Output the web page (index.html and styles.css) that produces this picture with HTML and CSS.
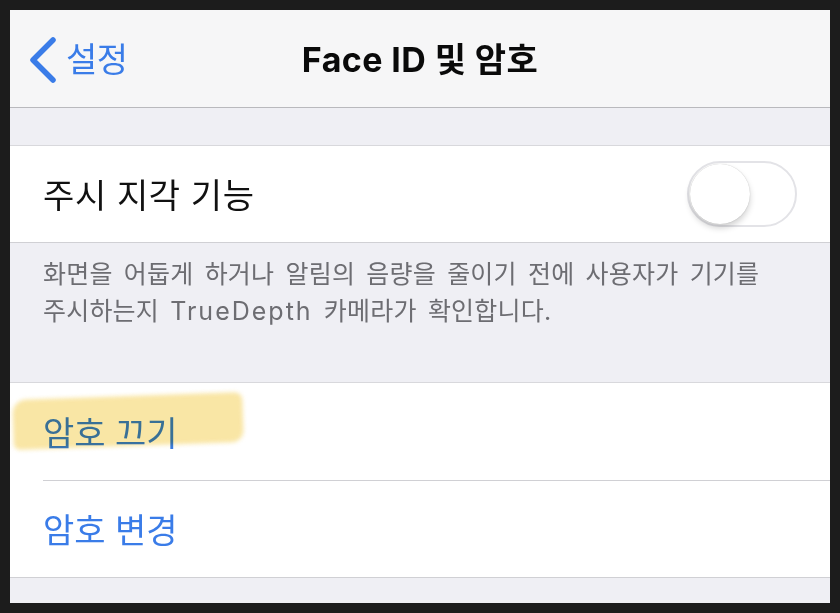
FILE: index.html
```html
<!DOCTYPE html>
<html lang="ko">
<head>
<meta charset="utf-8">
<title>Face ID 및 암호</title>
<link rel="stylesheet" href="styles.css">
</head>
<body>
<div class="screen">
  <header class="nav">
    <a class="back">
      <svg class="chevron" width="30" height="48" viewBox="0 0 30 48"><path d="M25 4 L5 24 L25 44" fill="none" stroke="#3a7ce8" stroke-width="5.5" stroke-linecap="round" stroke-linejoin="round"/></svg>
      <span class="back-label">설정</span>
    </a>
    <h1 class="title">Face ID 및 암호</h1>
  </header>
  <div class="spacer"></div>
  <section class="group">
    <div class="row">
      <span class="row-label wide">주시 지각 기능</span>
      <span class="toggle"><span class="knob"></span></span>
    </div>
  </section>
  <p class="footer-text">화면을 어둡게 하거나 알림의 음량을 줄이기 전에 사용자가 기기를<br>주시하는지 <span class="latin">TrueDepth</span> 카메라가 확인합니다.</p>
  <section class="group">
    <div class="row row-sep">
      <span class="row-label link">암호 끄기</span>
      <span class="highlight"></span>
    </div>
    <div class="row">
      <span class="row-label link">암호 변경</span>
    </div>
  </section>
  <div class="bottom"></div>
</div>
</body>
</html>
```

FILE: styles.css
```css
* { box-sizing: border-box; }
html, body { margin: 0; padding: 0; }
body {
  background: #1c1c1c;
  padding: 10px;
  font-family: "Inter", "Noto Sans CJK KR", sans-serif;
}
.screen {
  width: 820px;
  height: 593px;
  background: #efeff4;
  overflow: hidden;
  display: flex;
  flex-direction: column;
}
.nav {
  height: 98px;
  flex: none;
  background: #f6f6f7;
  border-bottom: 1px solid #b9b9bd;
  position: relative;
  display: flex;
  align-items: center;
  justify-content: center;
}
.back {
  position: absolute;
  left: 18px;
  top: 26px;
  display: flex;
  align-items: center;
  gap: 8px;
  color: #3a7ce8;
}
.chevron { display: block; }
.back-label {
  font-family: "Noto Sans CJK KR", sans-serif;
  font-size: 34px;
  line-height: 48px;
  letter-spacing: -0.5px;
  margin-top: -4px;
}
.title {
  margin: 0;
  font-size: 34px;
  font-weight: 700;
  color: #0a0a0a;
  letter-spacing: 0.4px;
  margin-top: -2px;
}
.spacer { height: 37px; flex: none; }
.group {
  background: #fff;
  border-top: 1px solid #d8d8dc;
  border-bottom: 1px solid #d0d0d4;
  flex: none;
}
.row {
  height: 96px;
  display: flex;
  align-items: center;
  justify-content: space-between;
  padding: 0 33px 0 33px;
  position: relative;
}
.row-sep::after {
  content: "";
  position: absolute;
  left: 33px;
  right: 0;
  bottom: 0;
  height: 1px;
  background: #d0d0d4;
}
.row-sep { height: 98px; }
.row-label {
  font-family: "Noto Sans CJK KR", sans-serif;
  font-size: 34px;
  color: #111;
  letter-spacing: 0;
  margin-top: -2px;
}
.wide { letter-spacing: 0.6px; }
.link { color: #3a7ce8; }
.toggle {
  width: 110px;
  height: 66px;
  border-radius: 33px;
  border: 2px solid #e3e3e7;
  background: #fff;
  position: relative;
}
.knob {
  position: absolute;
  left: 1px;
  top: 1px;
  width: 60px;
  height: 60px;
  border-radius: 50%;
  background: #fff;
  box-shadow: 0 4px 6px rgba(0,0,0,0.18), 0 0 1px rgba(0,0,0,0.25);
}
.footer-text {
  margin: 0;
  height: 139px;
  flex: none;
  padding: 13px 33px 0 33px;
  font-family: "Inter", "Noto Sans CJK KR", sans-serif;
  font-size: 25px;
  line-height: 37px;
  color: #6d6d72;
  letter-spacing: 0.2px;
  word-spacing: 4px;
}
.latin { letter-spacing: 2px; }
.highlight {
  position: absolute;
  left: 3px;
  top: 13px;
  width: 230px;
  height: 50px;
  background: #f7dc82;
  opacity: 0.72;
  mix-blend-mode: multiply;
  border-radius: 14px 8px 12px 6px;
  transform: rotate(-2deg);
  filter: blur(2px);
}
.bottom { flex: 1; }
```
